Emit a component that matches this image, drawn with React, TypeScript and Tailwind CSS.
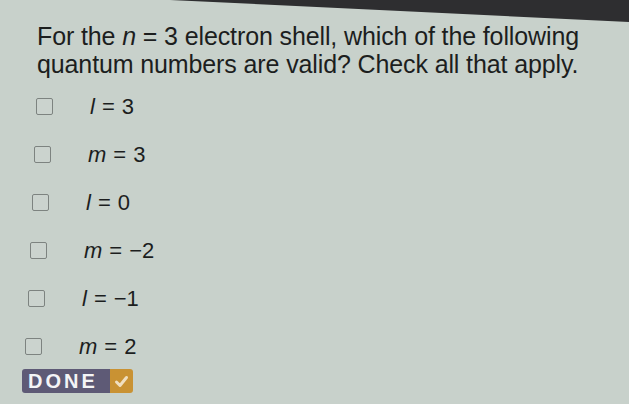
import React from "react";

const rows: { v: string; val: string }[] = [
  { v: "l", val: "3" },
  { v: "m", val: "3" },
  { v: "l", val: "0" },
  { v: "m", val: "−2" },
  { v: "l", val: "−1" },
  { v: "m", val: "2" },
];

const pls = ["pl-[36px]", "pl-[34px]", "pl-[32px]", "pl-[30px]", "pl-[28px]", "pl-[25px]"];

export default function App() {
  return (
    <div
      className="relative w-[629px] h-[404px] overflow-hidden bg-[#c8d1cb] text-[#1c1e1e]"
      style={{ fontFamily: '"Liberation Sans", Arial, sans-serif' }}
    >
      <div
        className="absolute top-0 left-0 w-[629px] h-[24px] bg-[#2e2e30]"
        style={{ clipPath: "polygon(170px 0, 629px 0, 629px 22px)" }}
      />
      <div className="pt-[22px] pl-[37px] text-[25px] leading-[28px] tracking-[-0.12px]">
        <div>
          For the <i>n</i> = 3 electron shell, which of the following
        </div>
        <div>quantum numbers are valid? Check all that apply.</div>
      </div>
      <div className="mt-[19px] flex flex-col gap-[29px]">
        {rows.map((r, i) => (
          <div key={i} className={`flex items-center ${pls[i]}`}>
            <div className="w-[17px] h-[17px] border-[1.5px] border-[#7d8380] rounded-[2px] bg-[#cbd3ce]" />
            <div className="ml-[37px] text-[22px] leading-[19px] flex items-center gap-[7px]">
              <i>{r.v}</i>
              <span>=</span>
              <span>{r.val}</span>
            </div>
          </div>
        ))}
      </div>
      <div className="absolute left-[22px] top-[369px] flex h-[24px] rounded-[3px] overflow-hidden">
        <div className="bg-[#5e5a76] text-[#f4f4f6] font-bold text-[20px] tracking-[3px] pl-[6px] pr-[10px] w-[88px] flex items-center">
          DONE
        </div>
        <div className="bg-[#c99233] w-[23px] flex items-center justify-center">
          <svg width="15" height="13" viewBox="0 0 15 13">
            <path d="M2.5 7 L6 10.5 L12.5 2.5" fill="none" stroke="#f0dfc0" strokeWidth="3" strokeLinecap="round" strokeLinejoin="round" />
          </svg>
        </div>
      </div>
    </div>
  );
}
